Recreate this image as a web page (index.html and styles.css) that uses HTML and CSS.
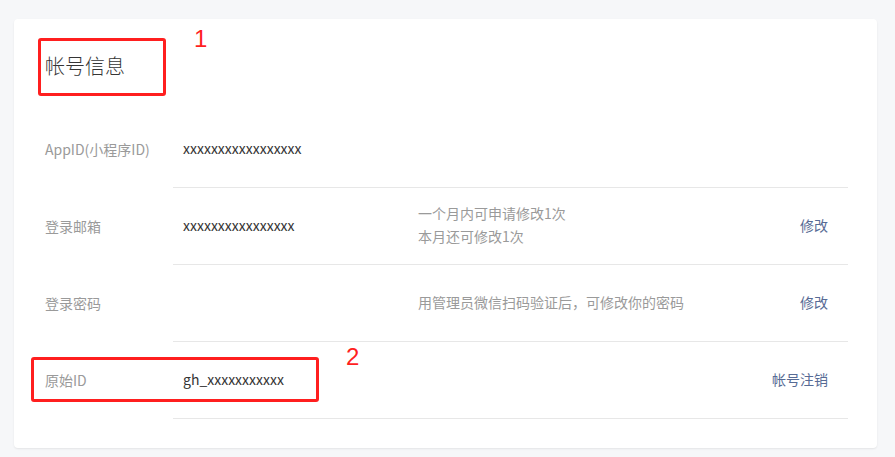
FILE: index.html
```html
<!DOCTYPE html>
<html lang="zh-CN">
<head>
    <meta charset="UTF-8">
    <meta name="viewport" content="width=device-width, initial-scale=1.0">
    <title>帐号信息</title>
    <link rel="stylesheet" href="styles.css">
</head>
<body>
    <div class="card">
        <h2 class="card-title">帐号信息</h2>
        <div class="info-list">
            <div class="info-row">
                <div class="info-label">AppID(小程序ID)</div>
                <div class="info-cell">
                    <div class="info-value">xxxxxxxxxxxxxxxxx</div>
                    <div class="info-desc"></div>
                    <div class="info-action"></div>
                </div>
            </div>
            <div class="info-row">
                <div class="info-label">登录邮箱</div>
                <div class="info-cell">
                    <div class="info-value">xxxxxxxxxxxxxxxx</div>
                    <div class="info-desc">一个月内可申请修改1次<br>本月还可修改1次</div>
                    <a class="info-action" href="#">修改</a>
                </div>
            </div>
            <div class="info-row">
                <div class="info-label">登录密码</div>
                <div class="info-cell">
                    <div class="info-value"></div>
                    <div class="info-desc">用管理员微信扫码验证后，可修改你的密码</div>
                    <a class="info-action" href="#">修改</a>
                </div>
            </div>
            <div class="info-row">
                <div class="info-label">原始ID</div>
                <div class="info-cell">
                    <div class="info-value">gh_xxxxxxxxxxx</div>
                    <div class="info-desc"></div>
                    <a class="info-action" href="#">帐号注销</a>
                </div>
            </div>
        </div>

        <!-- annotations -->
        <div class="mark mark-title"></div>
        <div class="mark-num num-1">1</div>
        <div class="mark mark-id"></div>
        <div class="mark-num num-2">2</div>
    </div>
</body>
</html>
```

FILE: styles.css
```css
body {
    margin: 0;
    padding: 19px 18px 9px 14px;
    background-color: #f6f7f9;
    font-family: "Noto Sans CJK SC", "Noto Sans", sans-serif;
    color: #353535;
}
.card {
    position: relative;
    background: #fff;
    border-radius: 4px;
    box-shadow: 0 1px 2px rgba(0, 0, 0, 0.08);
    padding: 33px 29px 29px 31px;
}
.card-title {
    margin: 0 0 31px;
    font-size: 20px;
    font-weight: 300;
    line-height: 28px;
    color: #353535;
}
.info-row {
    display: flex;
    font-size: 14px;
}
.info-label {
    width: 128px;
    flex-shrink: 0;
    display: flex;
    align-items: center;
    padding-bottom: 2px;
    color: #9a9a9a;
}
.info-cell {
    flex: 1;
    display: flex;
    align-items: center;
    height: 74px;
    padding: 0 20px 2px 10px;
    border-bottom: 1px solid #e7e7e7;
}
.info-value {
    width: 235px;
    flex-shrink: 0;
    color: #353535;
}
.info-desc {
    flex: 1;
    color: #9a9a9a;
    line-height: 23px;
}
.info-action {
    color: #576b95;
    text-decoration: none;
}
.mark {
    position: absolute;
    border: 3px solid #ff1f1f;
    border-radius: 3px;
    box-sizing: border-box;
}
.mark-title {
    left: 24px;
    top: 19px;
    width: 128px;
    height: 58px;
}
.mark-id {
    left: 17px;
    top: 338px;
    width: 288px;
    height: 45px;
}
.mark-num {
    position: absolute;
    font-family: "Liberation Sans", Arial, sans-serif;
    font-size: 24px;
    line-height: 24px;
    color: #ff1f1f;
}
.num-1 {
    left: 180px;
    top: 8px;
}
.num-2 {
    left: 332px;
    top: 326px;
}
```
